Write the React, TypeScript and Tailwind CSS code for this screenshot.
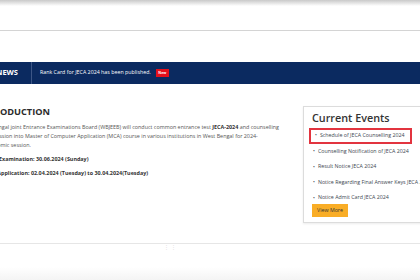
import React from "react";

const EVENTS = [
  "Schedule of JECA Counselling 2024",
  "Counselling Notification of JECA 2024",
  "Result Notice JECA 2024",
  "Notice Regarding Final Answer Keys JECA 2024",
  "Notice Admit Card JECA 2024",
];

export default function App() {
  return (
    <div className="w-[420px] h-[280px] overflow-hidden bg-white flex flex-col font-['Open_Sans',sans-serif]">
      {/* header strip */}
      <div className="h-[31px] shrink-0 bg-gradient-to-b from-[#c9c9c9] via-white via-[20%] to-white border-b border-[#d4d4d4]" />

      <div className="h-[31px] shrink-0" />

      {/* news ticker */}
      <div className="h-[22px] shrink-0 flex items-center bg-[#0b2a60]">
        <div className="w-[32px] h-full shrink-0 flex items-center justify-end pr-[13px] border-r border-[#3d5686] overflow-hidden">
          <span className="text-[7.5px] font-bold text-white whitespace-nowrap">NEWS</span>
        </div>
        <div className="flex items-center pl-[8px] gap-[5px]">
          <span className="text-[5.3px] text-white whitespace-nowrap">Rank Card for JECA 2024 has been published.</span>
          <span className="bg-[#e3101b] text-white text-[3.5px] font-bold leading-none px-[2.5px] py-[2px]">New</span>
        </div>
      </div>

      {/* main content */}
      <div className="flex h-[159px] shrink-0">
        <div className="w-[300px] shrink-0 overflow-hidden">
          <div className="-ml-[22px] pt-[22px] text-[#555]">
            <h2 className="text-[9.2px] leading-[12px] font-bold text-[#2b2b2b] whitespace-nowrap mb-[5px]">INTRODUCTION</h2>
            <div className="text-[5.4px] leading-[9px] whitespace-nowrap">
              <div>West Bengal joint Entrance Examinations Board (WBJEEB) will conduct common entrance test <b className="text-[#333]">JECA-2024</b> and counselling</div>
              <div>for admission into Master of Computer Application (MCA) course in various institutions in West Bengal for 2024-</div>
              <div>25 academic session.</div>
            </div>
            <div className="text-[5.4px] leading-[14px] font-bold text-[#333] whitespace-nowrap mt-[2px]">
              <div>Date of Examination: 30.06.2024 (Sunday)</div>
              <div>Online Application: 02.04.2024 (Tuesday) to 30.04.2024(Tuesday)</div>
            </div>
          </div>
        </div>

        <div className="pl-[3px] pt-[22px] flex-1">
          <div className="w-[140px] h-[117px] border border-[#dcdcdc] shadow-[0_1px_2px_rgba(0,0,0,0.08)] pl-[8px] pt-[4px]">
            <h3 className="text-[10.8px] leading-[14px] font-semibold text-[#333] whitespace-nowrap">Current Events</h3>
            <ul className="mt-[3px] -ml-[3px] flex flex-col">
              {EVENTS.map((e, i) => (
                <li
                  key={e}
                  className={`h-[15.5px] flex items-center gap-[3px] pl-[4px] text-[5.3px] text-[#3d4650] whitespace-nowrap ${
                    i === 0 ? "border-2 border-[#e2343f] w-[103px] h-[16px]" : ""
                  }`}
                >
                  <span className="text-[5px]">•</span>
                  <span>{e}</span>
                </li>
              ))}
            </ul>
            <button className="-mt-[2px] w-[36px] h-[13px] bg-[#f9ad26] text-[5.3px] text-[#333] flex items-center justify-center">
              View More
            </button>
          </div>
        </div>
      </div>

      {/* footer line */}
      <div className="h-[2px] shrink-0 border-t border-[#e6e6e6] flex justify-center">
        <span className="text-[5px] leading-[6px] text-[#ddd] -ml-[80px]">⋮ ⋮</span>
      </div>
      <div className="h-[22px] shrink-0" />
      <div className="flex-1 bg-gradient-to-b from-white to-[#f4f4f4]" />
    </div>
  );
}
